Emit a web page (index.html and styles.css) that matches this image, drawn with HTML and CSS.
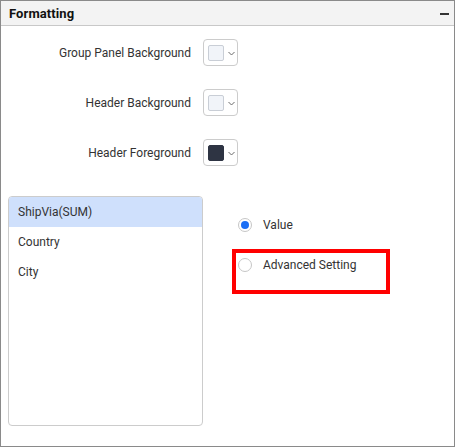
FILE: index.html
```html
<!DOCTYPE html>
<html>
<head>
<meta charset="utf-8">
<link rel="stylesheet" href="styles.css">
</head>
<body>
<div class="panel">
  <div class="panel-header">
    <span class="title">Formatting</span>
    <span class="collapse"></span>
  </div>
  <div class="panel-body">
    <div class="rows">
      <div class="row">
        <span class="label">Group Panel Background</span>
        <div class="picker"><span class="swatch light"></span><svg class="chev" width="7" height="5" viewBox="0 0 7 5"><path d="M0.5 1 L3.5 4 L6.5 1" fill="none" stroke="#6b6b6b" stroke-width="1"/></svg></div>
      </div>
      <div class="row">
        <span class="label">Header Background</span>
        <div class="picker"><span class="swatch light"></span><svg class="chev" width="7" height="5" viewBox="0 0 7 5"><path d="M0.5 1 L3.5 4 L6.5 1" fill="none" stroke="#6b6b6b" stroke-width="1"/></svg></div>
      </div>
      <div class="row">
        <span class="label">Header Foreground</span>
        <div class="picker"><span class="swatch dark"></span><svg class="chev" width="7" height="5" viewBox="0 0 7 5"><path d="M0.5 1 L3.5 4 L6.5 1" fill="none" stroke="#6b6b6b" stroke-width="1"/></svg></div>
      </div>
    </div>
    <div class="bottom">
      <ul class="list">
        <li class="item selected">ShipVia(SUM)</li>
        <li class="item">Country</li>
        <li class="item">City</li>
      </ul>
      <div class="radios">
        <label class="radio-row">
          <span class="radio checked"></span>
          <span class="radio-text">Value</span>
        </label>
        <label class="radio-row highlighted">
          <span class="radio"></span>
          <span class="radio-text">Advanced Setting</span>
          <span class="highlight-box"></span>
        </label>
      </div>
    </div>
  </div>
</div>
</body>
</html>
```
FILE: styles.css
```css
html, body {
  margin: 0;
  padding: 0;
  background: #ffffff;
}
body {
  font-family: Roboto, "Liberation Sans", sans-serif;
  font-size: 12px;
  color: #333333;
}
.panel {
  width: 455px;
  height: 447px;
  box-sizing: border-box;
  border: 1px solid #8a8a8a;
  display: flex;
  flex-direction: column;
}
.panel-header {
  height: 24px;
  background: #f3f3f3;
  border-bottom: 1px solid #c8c8c8;
  display: flex;
  align-items: center;
  justify-content: space-between;
  padding: 0 5px 0 8px;
}
.title {
  font-weight: 700;
  font-size: 13px;
  color: #111111;
  letter-spacing: 0.1px;
}
.collapse {
  width: 9px;
  height: 2px;
  background: #333333;
  margin-top: 1px;
}
.panel-body {
  flex: 1;
  position: relative;
}
.rows {
  display: flex;
  flex-direction: column;
  gap: 23px;
  padding-top: 13px;
}
.row {
  display: flex;
  align-items: center;
  height: 27px;
}
.label {
  width: 190px;
  text-align: right;
  color: #333333;
}
.picker {
  margin-left: 12px;
  width: 35px;
  height: 27px;
  box-sizing: border-box;
  border: 1px solid #cccccc;
  border-radius: 4px;
  display: flex;
  align-items: center;
  padding-left: 4px;
}
.swatch {
  width: 16px;
  height: 16px;
  box-sizing: border-box;
  border: 1px solid #c9ced6;
  border-radius: 2px;
}
.swatch.light {
  background: #f1f4f9;
}
.swatch.dark {
  background: #2e3443;
  border-color: #2e3443;
}
.chev {
  margin-left: 4px;
  margin-top: 1px;
}
.bottom {
  display: flex;
  margin-top: 30px;
  padding-left: 7px;
}
.list {
  list-style: none;
  margin: 0;
  padding: 0;
  width: 195px;
  height: 230px;
  box-sizing: border-box;
  border: 1px solid #cccccc;
  border-radius: 4px;
  overflow: hidden;
}
.item {
  height: 30px;
  line-height: 30px;
  padding-left: 9px;
  color: #333333;
}
.item.selected {
  background: #cfe0fc;
}
.radios {
  display: flex;
  flex-direction: column;
  gap: 26px;
  padding-top: 22px;
  padding-left: 35px;
}
.radio-row {
  display: flex;
  align-items: center;
  height: 14px;
  position: relative;
}
.radio {
  width: 14px;
  height: 14px;
  box-sizing: border-box;
  border: 1px solid #c6c6c6;
  border-radius: 50%;
  display: flex;
  align-items: center;
  justify-content: center;
}
.radio.checked::after {
  content: "";
  width: 8px;
  height: 8px;
  border-radius: 50%;
  background: #1a6ef5;
}
.radio-text {
  margin-left: 11px;
  color: #333333;
}
.highlight-box {
  position: absolute;
  left: -6px;
  top: -9px;
  width: 158px;
  height: 45px;
  box-sizing: border-box;
  border: 4px solid #ff0000;
}
```
